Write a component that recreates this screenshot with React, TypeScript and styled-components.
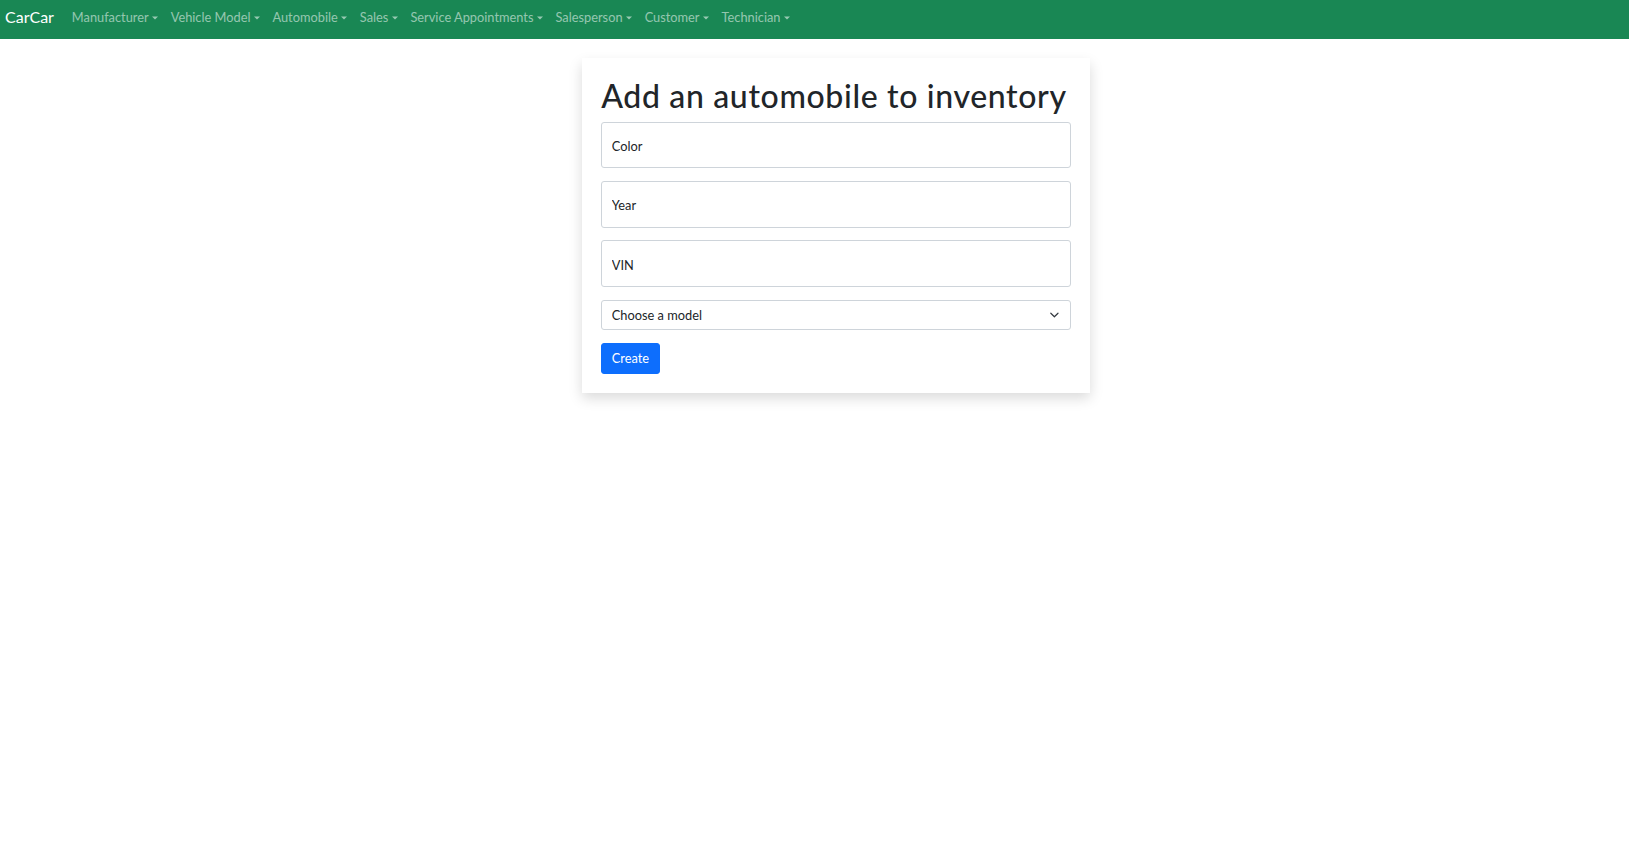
import React from "react";
import styled, { createGlobalStyle } from "styled-components";

const FONT = `Lato, "Open Sans", "Noto Sans", sans-serif`;

const Global = createGlobalStyle`
  html, body { margin: 0; padding: 0; background: #fff; }
  body { font-family: ${FONT}; color: #212529; min-height: 100vh; }
  * { box-sizing: border-box; }
`;

const Navbar = styled.nav`
  display: flex;
  align-items: center;
  height: 39px;
  padding: 0 5px 5px;
  background: #198754;
`;

const Brand = styled.a`
  color: #fff;
  font-size: 16px;
  font-weight: 400;
  line-height: 24px;
  margin-right: 11.5px;
  text-decoration: none;
`;

const NavList = styled.ul`
  display: flex;
  list-style: none;
  margin: 0;
  padding: 0;
`;

const NavLink = styled.a`
  display: inline-flex;
  align-items: center;
  padding: 0 6.4px;
  color: rgba(255, 255, 255, 0.55);
  font-size: 12.8px;
  line-height: 19.2px;
  text-decoration: none;
  cursor: pointer;

  &::after {
    content: "";
    display: inline-block;
    margin-left: 3.3px;
    border-top: 3.84px solid;
    border-left: 3.84px solid transparent;
    border-right: 3.84px solid transparent;
    border-bottom: 0;
    transform: translateY(0.5px);
  }
`;

const Main = styled.main`
  display: flex;
  justify-content: center;
  padding: 19px 0 40px 43px;
`;

const Card = styled.section`
  width: 508px;
  padding: 19.2px;
  background: #fff;
  box-shadow: 0 6.4px 12.8px rgba(0, 0, 0, 0.15);
`;

const Title = styled.h1`
  margin: 0 0 6.4px;
  font-size: 32px;
  font-weight: 500;
  letter-spacing: 0.65px;
  line-height: 38.4px;
  color: #212529;
`;

const Form = styled.form`
  display: flex;
  flex-direction: column;
  gap: 12.8px;
`;

const Field = styled.input`
  width: 100%;
  height: 46.4px;
  padding: 2px 9.6px 0;
  border: 1px solid #ced4da;
  border-radius: 3px;
  font-family: ${FONT};
  font-size: 12.8px;
  color: #212529;
  background: #fff;
  outline: none;

  &::placeholder {
    color: #212529;
    opacity: 1;
  }
`;

const SelectWrap = styled.div`
  position: relative;
`;

const Select = styled.select`
  width: 100%;
  height: 30.4px;
  padding: 0 36px 0 9.6px;
  border: 1px solid #ced4da;
  border-radius: 3px;
  font-family: ${FONT};
  font-size: 12.8px;
  color: #212529;
  background: #fff;
  appearance: none;
  -webkit-appearance: none;
  outline: none;
`;

const Chevron = styled.svg`
  position: absolute;
  right: 9.6px;
  top: 50%;
  width: 12.8px;
  height: 9.6px;
  transform: translateY(-50%);
  pointer-events: none;
`;

const Button = styled.button`
  align-self: flex-start;
  padding: 4.8px 9.6px;
  border: 1px solid #0d6efd;
  border-radius: 3px;
  background: #0d6efd;
  color: #fff;
  font-family: ${FONT};
  font-size: 12.8px;
  line-height: 19.2px;
  cursor: pointer;
`;

const links = [
  "Manufacturer",
  "Vehicle Model",
  "Automobile",
  "Sales",
  "Service Appointments",
  "Salesperson",
  "Customer",
  "Technician",
];

export default function App() {
  return (
    <>
      <Global />
      <Navbar>
        <Brand href="#">CarCar</Brand>
        <NavList>
          {links.map((l) => (
            <li key={l}>
              <NavLink>{l}</NavLink>
            </li>
          ))}
        </NavList>
      </Navbar>
      <Main>
        <Card>
          <Title>Add an automobile to inventory</Title>
          <Form onSubmit={(e) => e.preventDefault()}>
            <Field placeholder="Color" />
            <Field placeholder="Year" />
            <Field placeholder="VIN" />
            <SelectWrap>
              <Select defaultValue="">
                <option value="">Choose a model</option>
              </Select>
              <Chevron viewBox="0 0 16 16">
                <path
                  d="M2 5l6 6 6-6"
                  fill="none"
                  stroke="#343a40"
                  strokeWidth="2"
                  strokeLinecap="round"
                  strokeLinejoin="round"
                />
              </Chevron>
            </SelectWrap>
            <Button type="submit">Create</Button>
          </Form>
        </Card>
      </Main>
    </>
  );
}
